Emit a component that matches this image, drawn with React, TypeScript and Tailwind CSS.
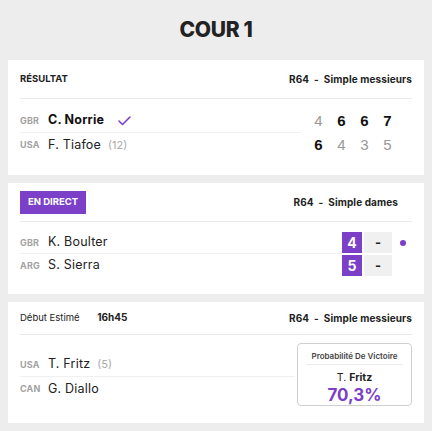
import React from 'react';

const purple = 'bg-[#7b3fc8]';

type Player = { country: string; name: string; seed?: string; bold?: boolean; check?: boolean };

const PlayerRow: React.FC<{ p: Player; divider?: boolean; h?: string }> = ({ p, divider, h = 'h-[24px]' }) => (
  <div className={`flex items-center ${h} ${divider ? 'border-b border-[#f0f0f0]' : ''}`}>
    <span className="w-[28px] text-[9px] font-bold text-[#a3a3a3] tracking-[0.2px]">{p.country}</span>
    <span className={`text-[12.5px] tracking-[0.2px] ${p.bold ? 'font-bold text-[#111]' : 'text-[#222]'}`}>{p.name}</span>
    {p.seed && <span className="ml-[7px] text-[11px] text-[#aaa]">{p.seed}</span>}
    {p.check && (
      <svg className="ml-[14px]" width="13" height="10" viewBox="0 0 13 10">
        <polyline points="1,5 4.5,8.5 12,1" fill="none" stroke="#7b3fc8" strokeWidth="1.6" strokeLinecap="round" strokeLinejoin="round" />
      </svg>
    )}
  </div>
);

const Score: React.FC<{ v: string; win?: boolean }> = ({ v, win }) => (
  <span
    className={`w-[23px] text-center text-[15px] [font-family:'Liberation_Sans',Arial,sans-serif] ${
      win ? 'font-bold text-[#111]' : 'text-[#999]'
    }`}
  >
    {v}
  </span>
);

const Header: React.FC<{ left: React.ReactNode; right: string; h?: string }> = ({ left, right, h = 'h-[39px]' }) => (
  <div className={`flex items-center justify-between ${h} border-b border-[#ebebeb]`}>
    {left}
    <span className="text-[10px] font-bold text-[#222] tracking-[0.1px]">
      R64&nbsp; -&nbsp; {right}
    </span>
  </div>
);

export default function App() {
  return (
    <div className="min-h-screen bg-[#ededed] px-2 pb-2 [font-family:Inter,'Noto_Sans',sans-serif]">
      <div className="h-[60px] flex items-center justify-center">
        <h1 className="text-[21px] font-extrabold text-[#222] tracking-[-0.3px]">COUR 1</h1>
      </div>

      {/* Résultat */}
      <div className="bg-white px-3">
        <Header left={<span className="text-[9.5px] font-bold text-[#222]">RÉSULTAT</span>} right="Simple messieurs" />
        <div className="flex pt-[10px] pb-[18px]">
          <div className="flex-1 mr-[6px]">
            <PlayerRow p={{ country: 'GBR', name: 'C. Norrie', bold: true, check: true }} divider />
            <PlayerRow p={{ country: 'USA', name: 'F. Tiafoe', seed: '(12)' }} />
          </div>
          <div className="pr-[13px]">
            <div className="flex items-center h-[24px]">
              <Score v="4" />
              <Score v="6" win />
              <Score v="6" win />
              <Score v="7" win />
            </div>
            <div className="flex items-center h-[24px]">
              <Score v="6" win />
              <Score v="4" />
              <Score v="3" />
              <Score v="5" />
            </div>
          </div>
        </div>
      </div>

      {/* En direct */}
      <div className="bg-white px-3 mt-2">
        <div className="flex items-center justify-between h-[39px] border-b border-[#ebebeb]">
          <span className={`${purple} text-white text-[9.5px] font-bold h-[23px] px-[8px] flex items-center`}>EN DIRECT</span>
          <span className="text-[10px] font-bold text-[#222] mr-[14px] tracking-[0.1px]">R64&nbsp; -&nbsp; Simple dames</span>
        </div>
        <div className="flex pt-[10px] pb-[17px]">
          <div className="flex-1">
            <PlayerRow p={{ country: 'GBR', name: 'K. Boulter' }} divider h="h-[22px]" />
            <PlayerRow p={{ country: 'ARG', name: 'S. Sierra' }} h="h-[23px]" />
          </div>
          <div className="flex flex-col gap-[2px]">
            {['4', '5'].map((v, i) => (
              <div key={v} className="flex items-center gap-[2px]">
                <span className={`${purple} text-white w-[20px] h-[21px] flex items-center justify-center text-[14px] font-bold`}>{v}</span>
                <span className="bg-[#f0f0f0] w-[28px] h-[21px] flex items-center justify-center text-[13px] font-bold text-[#222]">-</span>
                <span className="w-[18px] flex justify-center">
                  {i === 0 && <span className={`${purple} w-[6px] h-[6px] rounded-full`} />}
                </span>
              </div>
            ))}
          </div>
        </div>
      </div>

      {/* A venir */}
      <div className="bg-white px-3 mt-2">
        <Header
          h="h-[33px]"
          left={
            <span className="text-[9.5px] text-[#222]">
              Début Estimé <span className="ml-[15px] font-bold text-[10px]">16h45</span>
            </span>
          }
          right="Simple messieurs"
        />
        <div className="flex pt-[8px] pb-[17px]">
          <div className="flex-1 pt-[10px] mr-[2px]">
            <PlayerRow p={{ country: 'USA', name: 'T. Fritz', seed: '(5)' }} divider />
            <PlayerRow p={{ country: 'CAN', name: 'G. Diallo' }} />
          </div>
          <div className="w-[115px] h-[63px] border border-[#cfcfcf] rounded-[4px] px-[8px] flex flex-col items-center">
            <div className="w-full text-center text-[8px] leading-[10px] font-semibold text-[#444] pt-[7px] pb-[3px] border-b border-[#ebebeb]">
              Probabilité De Victoire
            </div>
            <div className="text-[10.5px] leading-[13px] text-[#222] mt-[6px]">
              T. <span className="font-bold">Fritz</span>
            </div>
            <div className="text-[17px] font-bold text-[#7b3fc8] leading-[20px] mt-[1px]">70,3%</div>
          </div>
        </div>
      </div>
    </div>
  );
}
